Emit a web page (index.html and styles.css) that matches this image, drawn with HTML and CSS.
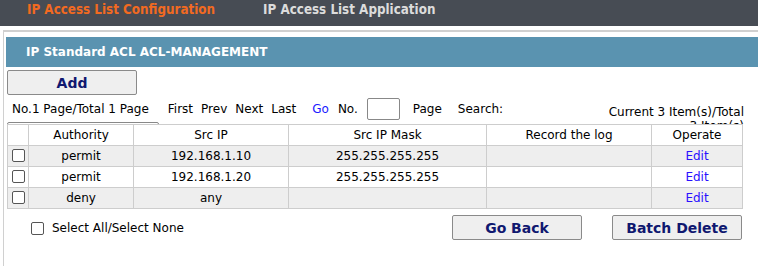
FILE: index.html
```html
<!DOCTYPE html>
<html lang="en">
<head>
    <meta charset="UTF-8">
    <title>IP Access List Configuration</title>
    <link rel="stylesheet" href="styles.css">
</head>
<body>
    <div class="tabs">
        <span class="tab active">IP Access List Configuration</span>
        <span class="tab">IP Access List Application</span>
    </div>
    <div class="panel">
        <div class="title">IP Standard ACL ACL-MANAGEMENT</div>
        <button type="button" class="btn btn-add">Add</button>
        <div class="pager">
            <div class="pager-left">
                <span class="page-info">No.1 Page/Total 1 Page</span>
                <span class="nav">First</span>
                <span class="nav">Prev</span>
                <span class="nav">Next</span>
                <span class="nav">Last</span>
                <span class="go">Go</span>
                <span>No.</span>
                <input type="text" class="page-input">
                <span class="page-word">Page</span>
                <span>Search:</span>
            </div>
            <div class="count">Current 3 Item(s)/Total 3 Item(s)</div>
            <div class="search-box"></div>
        </div>
        <table class="list">
            <tr>
                <th class="c-check"></th>
                <th class="c-auth">Authority</th>
                <th class="c-ip">Src IP</th>
                <th class="c-mask">Src IP Mask</th>
                <th class="c-log">Record the log</th>
                <th class="c-op">Operate</th>
            </tr>
            <tr class="odd">
                <td><span class="box"></span></td>
                <td>permit</td>
                <td>192.168.1.10</td>
                <td>255.255.255.255</td>
                <td></td>
                <td><a href="#">Edit</a></td>
            </tr>
            <tr>
                <td><span class="box"></span></td>
                <td>permit</td>
                <td>192.168.1.20</td>
                <td>255.255.255.255</td>
                <td></td>
                <td><a href="#">Edit</a></td>
            </tr>
            <tr class="odd">
                <td><span class="box"></span></td>
                <td>deny</td>
                <td>any</td>
                <td></td>
                <td></td>
                <td><a href="#">Edit</a></td>
            </tr>
        </table>
        <div class="footer">
            <label class="select-all"><span class="box"></span>Select All/Select None</label>
            <div class="actions">
                <button type="button" class="btn btn-back">Go Back</button>
                <button type="button" class="btn btn-delete">Batch Delete</button>
            </div>
        </div>
    </div>
</body>
</html>
```

FILE: styles.css
```css
body { margin: 0; font-family: "DejaVu Sans", sans-serif; font-size: 12px; color: #000; background: #fff; overflow: hidden; }
.tabs { height: 26px; background-color: #474c54; display: flex; align-items: center; padding-left: 27px; padding-bottom: 8px; box-sizing: border-box; }
.tab { font-weight: bold; font-size: 13.3px; font-stretch: condensed; color: #dcdcdc; margin-right: 48px; }
.tab.active { color: #f26a21; }
.panel { margin: 4px 0 0 3px; border-top: 2px solid #d0d0d0; border-left: 1px solid #d0d0d0; padding: 5px 0 30px 2px; }
.title { height: 30px; line-height: 30px; background-color: #5a93b0; color: #fff; font-weight: bold; font-size: 12px; padding-left: 20px; }
.btn { font-family: "DejaVu Sans", sans-serif; font-weight: bold; font-size: 14px; color: #101870; background: #efefef; border: 1px solid #8a8a8a; border-radius: 2px; height: 25px; padding: 0; cursor: pointer; }
.btn-add { width: 130px; margin: 3px 0 0 1px; display: block; }
.pager { position: relative; height: 29px; display: flex; justify-content: space-between; }
.pager-left { display: flex; align-items: center; padding-left: 6px; height: 27px; }
.page-info { margin-right: 19px; }
.nav { margin-right: 8px; }
.nav:nth-child(5) { margin-right: 16px; }
.go { color: #1a1aff; margin-right: 9px; }
.page-input { width: 33px; height: 22px; box-sizing: border-box; border: 1px solid #888; border-radius: 2px; margin: 0 13px 0 9px; padding: 0; }
.page-word { margin-right: 16px; }
.count { width: 146px; height: 19px; overflow: hidden; text-align: right; margin: 10px 14px 0 0; line-height: 14px; }
.search-box { position: absolute; left: 1px; top: 27px; width: 152px; height: 20px; border: 1px solid #888; border-radius: 2px; box-sizing: border-box; }
.list { position: relative; border-collapse: collapse; width: 736px; margin-left: 1px; background: #fff; }
.list th, .list td { border: 1px solid #cdcdcd; height: 20px; padding: 0; text-align: center; font-weight: normal; }
.list tr.odd td { background-color: #eeeeee; }
.c-check { width: 20px; }
.c-auth { width: 104px; }
.c-ip { width: 154px; }
.c-mask { width: 197px; }
.c-log { width: 164px; }
.list a { color: #2a10ff; text-decoration: none; }
.box { display: inline-block; width: 11px; height: 11px; border: 1px solid #555; border-radius: 2px; background: #fff; vertical-align: middle; }
.list td .box { margin-top: -2px; }
.footer { display: flex; justify-content: space-between; align-items: flex-start; padding-top: 6px; }
.select-all { display: flex; align-items: center; margin: 6px 0 0 25px; }
.select-all .box { margin-right: 8px; }
.actions { display: flex; margin-right: 16px; }
.btn-back, .btn-delete { width: 130px; }
.btn-back { margin-right: 30px; }
```
